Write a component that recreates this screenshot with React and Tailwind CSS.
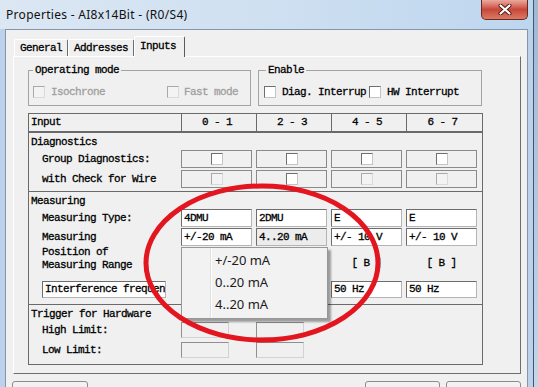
import React from "react";

const M = "font-['Liberation_Mono',monospace] text-[11px] tracking-[-0.6px] text-black [-webkit-text-stroke:0.3px_#000]";
const COLS = "grid grid-cols-[152px_75px_75px_75px_76px]";

function Check({ disabled }) {
  return (
    <span
      className={
        disabled
          ? "block w-[12px] h-[12px] border border-t-[#a9a9a9] border-l-[#a9a9a9] border-r-[#dadada] border-b-[#dadada] bg-[#f3f3f3]"
          : "block w-[12px] h-[12px] border border-t-[#6f6f6f] border-l-[#6f6f6f] border-r-[#c4c4c4] border-b-[#c4c4c4] bg-white"
      }
    />
  );
}

function CheckCell({ disabled }) {
  return (
    <div className="w-[71px] h-[18px] border border-[#8a8a8a] flex items-center justify-center">
      <Check disabled={disabled} />
    </div>
  );
}

function Input({ value, gray }) {
  return (
    <div
      className={
        (gray ? "bg-[#ececec] " : "bg-white ") +
        "w-[71px] h-[18px] border border-t-[#6d6d6d] border-l-[#6d6d6d] border-r-[#b4b4b4] border-b-[#b4b4b4] pl-[2px] flex items-center whitespace-nowrap overflow-hidden"
      }
    >
      {value}
    </div>
  );
}

function GrayBox() {
  return (
    <div className="w-[48px] h-[16px] border border-t-[#8f8f8f] border-l-[#8f8f8f] border-r-[#d2d2d2] border-b-[#d2d2d2] bg-[#f0f0f0]" />
  );
}

function Tab({ label }) {
  return (
    <div className="h-[17px] px-[5px] flex items-center rounded-t-[2px] border-t border-l border-r border-t-white border-l-white border-r-[#6d6d6d]">
      {label}
    </div>
  );
}

function Button({ w }) {
  return (
    <div
      className={
        w +
        " h-[23px] shrink-0 rounded-[3px] border border-[#8c8c8c] bg-linear-to-b from-[#f4f4f4] via-[#ebebeb] to-[#d6d6d6]"
      }
    />
  );
}

export default function App() {
  return (
    <div className="relative w-[538px] h-[387px] overflow-hidden flex bg-[#b3c9df]">
      {/* Window */}
      <div className="w-[534px] h-full shrink-0 flex flex-col bg-[#bcd2ea] border-r border-[#44566b]">
        {/* Title bar */}
        <div className="h-[29px] shrink-0 flex items-start justify-between bg-linear-to-r from-[#dbe7f3] via-[#cfe0f1] to-[#bdd6ef]">
          <span className="mt-[6px] ml-[6px] font-['Noto_Sans',sans-serif] text-[12px] tracking-[0.3px] leading-[18px] text-[#111]">
            Properties - AI8x14Bit - (R0/S4)
          </span>
          <div className="mr-[5px] w-[47px] h-[20px] rounded-b-[5px] border border-t-0 border-[#6b2820] bg-linear-to-b from-[#eaa99d] via-[#c8473a] to-[#d97a64] flex items-center justify-center">
            <svg width="14" height="11" viewBox="0 0 14 11">
              <path d="M2.5 1.5 L11.5 9.5 M11.5 1.5 L2.5 9.5" stroke="#4a1a14" strokeWidth="4" strokeLinecap="round" />
              <path d="M2.5 1.5 L11.5 9.5 M11.5 1.5 L2.5 9.5" stroke="#ffffff" strokeWidth="2.2" strokeLinecap="round" />
            </svg>
          </div>
        </div>

        {/* Client area */}
        <div className={"ml-[5px] mr-[5px] flex-1 flex flex-col border-l border-t border-r border-[#8596aa] bg-[#f0f0f0] pl-[7px] pr-[6px] pt-[6px] " + M}>
          {/* Tabs */}
          <div className="h-[20px] shrink-0 ml-[1px] flex items-end">
            <Tab label="General" />
            <Tab label="Addresses" />
            <div className="relative z-10 h-[21px] -mb-[1px] pl-[5px] pr-[8px] pb-[2px] flex items-center bg-[#f0f0f0] rounded-t-[2px] border-t border-l border-r border-t-white border-l-white border-r-[#5a5a5a]">
              Inputs
            </div>
          </div>

          {/* Tab panel */}
          <div className="h-[318px] shrink-0 border border-t-white border-l-white border-r-[#6d6d6d] border-b-[#6d6d6d] pl-[14px] pt-[7px]">
            {/* Group boxes */}
            <div className="flex gap-[7px]">
              <fieldset className="w-[223px] h-[42px] border border-[#a3a3a3] px-[4px]">
                <legend className="px-[2px] leading-[13px]">Operating mode</legend>
                <div className="mt-[7px] flex items-center text-[#a0a0a0] [-webkit-text-stroke:0.3px_#a0a0a0]">
                  <div className="w-[134px] flex items-center gap-[6px]">
                    <Check disabled />
                    <span>Isochrone</span>
                  </div>
                  <div className="flex items-center gap-[5px]">
                    <Check disabled />
                    <span>Fast mode</span>
                  </div>
                </div>
              </fieldset>
              <fieldset className="w-[224px] h-[42px] border border-[#a3a3a3] px-[5px]">
                <legend className="ml-[2px] px-[2px] leading-[13px]">Enable</legend>
                <div className="mt-[7px] flex items-center">
                  <div className="flex items-center gap-[6px]">
                    <Check />
                    <span>Diag. Interrup</span>
                  </div>
                  <div className="ml-[3px] flex items-center gap-[6px]">
                    <Check />
                    <span>HW Interrupt</span>
                  </div>
                </div>
              </fieldset>
            </div>

            {/* Table */}
            <div className="mt-[7px] w-[455px] border border-[#6a6a6a] flex flex-col">
              {/* Header */}
              <div className={COLS + " h-[19px] border-b-2 border-[#6a6a6a]"}>
                <div className="pl-[2px] flex items-center">Input</div>
                {["0 - 1", "2 - 3", "4 - 5", "6 - 7"].map((h) => (
                  <div key={h} className="border-l border-[#6a6a6a] pr-[4px] flex items-center justify-center">
                    {h}
                  </div>
                ))}
              </div>

              {/* Diagnostics */}
              <div className="pt-[1px] pb-[3px] border-b border-[#6a6a6a] flex flex-col">
                <div className="h-[16px] pl-[2px] flex items-center">Diagnostics</div>
                <div className={COLS + " h-[18px] items-center"}>
                  <div className="pl-[13px]">Group Diagnostics:</div>
                  <CheckCell />
                  <CheckCell />
                  <CheckCell />
                  <CheckCell />
                </div>
                <div className={COLS + " mt-[2px] h-[18px] items-center"}>
                  <div className="pl-[13px]">with Check for Wire</div>
                  <CheckCell disabled />
                  <CheckCell />
                  <CheckCell disabled />
                  <CheckCell disabled />
                </div>
              </div>

              {/* Measuring */}
              <div className="pt-[1px] pb-[6px] border-b border-[#6a6a6a] flex flex-col">
                <div className="h-[16px] pl-[2px] flex items-center">Measuring</div>
                <div className={COLS + " h-[18px] items-center"}>
                  <div className="pl-[13px]">Measuring Type:</div>
                  <Input value="4DMU" />
                  <Input value="2DMU" />
                  <Input value="E" />
                  <Input value="E" />
                </div>
                <div className={COLS + " mt-[1px] h-[18px] items-center"}>
                  <div className="pl-[13px]">Measuring</div>
                  <Input value="+/-20 mA" />
                  <Input value="4..20 mA" gray />
                  <Input value="+/- 10 V" />
                  <Input value="+/- 10 V" />
                </div>
                <div className={COLS + " h-[35px]"}>
                  <div className="pl-[13px] flex flex-col leading-[13px]">
                    <span>Position of</span>
                    <span>Measuring Range</span>
                  </div>
                  <div />
                  <div />
                  <div className="w-[71px] mt-[11px] leading-[13px] text-center">[ B ]</div>
                  <div className="w-[71px] mt-[11px] leading-[13px] text-center">[ B ]</div>
                </div>
                <div className={COLS + " h-[17px]"}>
                  <div className="pl-[13px]">
                    <div className="w-[124px] h-[17px] bg-white border border-t-[#6d6d6d] border-l-[#6d6d6d] border-r-[#b4b4b4] border-b-[#b4b4b4] pl-[2px] flex items-center whitespace-nowrap overflow-hidden">
                      Interference frequen
                    </div>
                  </div>
                  <div />
                  <div />
                  {[0, 1].map((i) => (
                    <div key={i} className="w-[71px] h-[17px] bg-white border border-t-[#6d6d6d] border-l-[#6d6d6d] border-r-[#b4b4b4] border-b-[#b4b4b4] pl-[2px] flex items-center">
                      50 Hz
                    </div>
                  ))}
                </div>
              </div>

              {/* Trigger */}
              <div className="pt-[1px] pb-[6px] flex flex-col">
                <div className="h-[16px] pl-[2px] flex items-center">Trigger for Hardware</div>
                <div className={COLS + " h-[16px] items-center"}>
                  <div className="pl-[13px]">High Limit:</div>
                  <GrayBox />
                  <GrayBox />
                </div>
                <div className={COLS + " mt-[4px] h-[16px] items-center"}>
                  <div className="pl-[13px]">Low Limit:</div>
                  <GrayBox />
                  <GrayBox />
                </div>
              </div>
            </div>
          </div>

          {/* Buttons */}
          <div className="mt-[7px] -ml-[1px] flex">
            <Button w="w-[76px]" />
            <div className="ml-auto flex gap-[6px]">
              <Button w="w-[75px]" />
              <Button w="w-[75px]" />
            </div>
          </div>
        </div>
      </div>

      {/* Background strip on the right */}
      <div className="flex-1 bg-linear-to-b from-[#9fb9d3] to-[#c3d6ea]" />

      {/* Open dropdown list */}
      <div className="absolute left-[181px] top-[247px] w-[147px] h-[72px] flex border border-[#979797] bg-[#f2f2f2] shadow-[3px_3px_2px_rgba(0,0,0,0.35)]">
        <div className="w-[29px] border-r border-[#e0e0e0] shadow-[1px_0_0_#ffffff]" />
        <div className="pt-[2px] pl-[4px] flex flex-col font-['Noto_Sans',sans-serif] text-[13px] text-[#1b1b1b]">
          <div className="h-[22px] flex items-center">+/-20 mA</div>
          <div className="h-[22px] flex items-center">0..20 mA</div>
          <div className="h-[22px] flex items-center">4..20 mA</div>
        </div>
      </div>

      {/* Red hand-drawn ellipse */}
      <svg className="absolute inset-0 pointer-events-none" width="538" height="387" viewBox="0 0 538 387">
        <ellipse cx="262" cy="263" rx="116" ry="77" fill="none" stroke="#e3151f" strokeWidth="5" />
      </svg>
    </div>
  );
}
